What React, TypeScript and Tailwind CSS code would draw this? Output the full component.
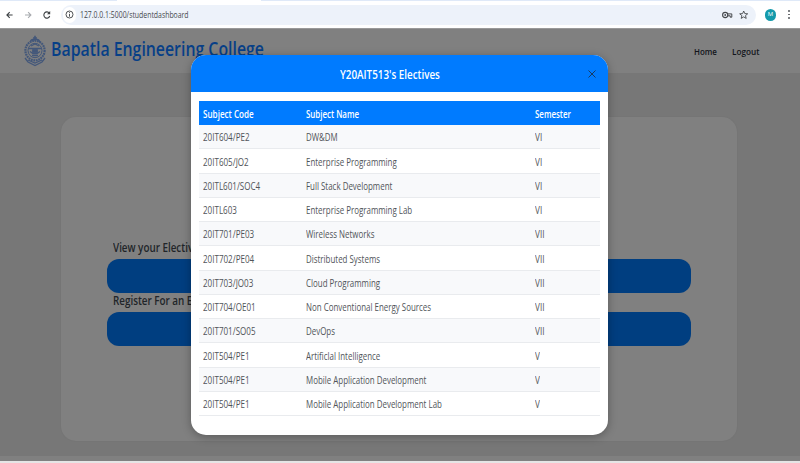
import React from 'react';

const electives: [string, string, string][] = [
  ['20IT604/PE2', 'DW&DM', 'VI'],
  ['20IT605/JO2', 'Enterprise Programming', 'VI'],
  ['20ITL601/SOC4', 'Full Stack Development', 'VI'],
  ['20ITL603', 'Enterprise Programming Lab', 'VI'],
  ['20IT701/PE03', 'Wireless Networks', 'VII'],
  ['20IT702/PE04', 'Distributed Systems', 'VII'],
  ['20IT703/JO03', 'Cloud Programming', 'VII'],
  ['20IT704/OE01', 'Non Conventional Energy Sources', 'VII'],
  ['20IT701/SO05', 'DevOps', 'VII'],
  ['20IT504/PE1', 'Artificlal Intelligence', 'V'],
  ['20IT504/PE1', 'Mobile Application Development', 'V'],
  ['20IT504/PE1', 'Mobile Application Development Lab', 'V'],
];

function T({ children, className = '' }: { children: React.ReactNode; className?: string }) {
  return <span className={`inline-block origin-left whitespace-nowrap ${className}`}>{children}</span>;
}

function Crest() {
  return (
    <svg width="24" height="32" viewBox="0 0 24 32" fill="none" stroke="#2f4a78" className="shrink-0 opacity-75">
      <path d="M12 .8v5M10 3h4" strokeWidth="1.6" />
      <path d="M7.5 7c0-3.6 9-3.6 9 0" strokeWidth="1.5" />
      <ellipse cx="12" cy="15.5" rx="9.6" ry="9.8" strokeWidth="2.2" strokeDasharray="1.8 .7" />
      <ellipse cx="12" cy="15.5" rx="7" ry="7.2" strokeWidth="1" />
      <path d="M5.5 13.5h13M7 16.5l3 2h4l3-2M8 11l4-2 4 2M9 20.5h6" strokeWidth="1.3" />
      <path d="M9.5 14.5h5v3h-5z" fill="#2f4a78" strokeWidth=".8" />
      <path d="M2 23l3 4 7 3.5 7-3.5 3-4M5 25l7 3 7-3" strokeWidth="1.3" />
    </svg>
  );
}

function BrowserBar() {
  return (
    <div className="flex h-7 shrink-0 flex-col bg-white">
      <div className="flex h-px shrink-0 bg-[#dfe9f8]">
        <div className="ml-[117px] h-px w-[144px] bg-white" />
      </div>
      <div className="flex flex-1 items-center">
        <svg width="61" height="20" viewBox="0 0 61 20" fill="none" strokeWidth="1.1" className="shrink-0">
          <path d="M12.6 10H7M9.7 7.2 6.9 10l2.8 2.8" stroke="#3c4043" />
          <path d="M25 10h5.8M28.1 7.2l2.8 2.8-2.8 2.8" stroke="#a8abaf" />
          <path d="M49.3 8.2a3 3.1 0 1 0 .4 2.8" stroke="#3c4043" />
          <path d="M50.2 6v3.2H47z" fill="#3c4043" stroke="none" />
        </svg>
        <div className="flex h-5 w-[695px] shrink-0 items-center rounded-full bg-[#edf2fa] pl-[2px] pr-[7px]">
          <div className="flex h-4 w-[13px] items-center justify-center rounded-full bg-white">
            <svg width="9" height="9" viewBox="0 0 9 9" fill="none" stroke="#3c4043" strokeWidth=".9">
              <circle cx="4.5" cy="4.5" r="3.5" />
              <path d="M4.5 4v2.7M4.5 2.2v1" />
            </svg>
          </div>
          <T className="ml-1 scale-x-[.765] text-[9px] text-[#45484c]">127.0.0.1:5000/studentdashboard</T>
          <svg width="28" height="12" viewBox="0 0 28 12" fill="none" stroke="#45484c" className="ml-auto">
            <circle cx="4.2" cy="6" r="2.6" strokeWidth="1.1" />
            <circle cx="4.2" cy="6" r=".9" fill="#45484c" stroke="none" />
            <path d="M6.8 4.9h4v3.3H9.2V6.8H6.8" strokeWidth="1" />
            <path d="m22.7 2 1.1 2.6 2.9.2-2.2 1.8.7 2.8-2.5-1.5-2.5 1.5.7-2.8-2.2-1.8 2.9-.2z" strokeWidth=".9" />
          </svg>
        </div>
        <div className="ml-[9px] flex h-3 w-[11px] items-center justify-center rounded-full bg-[#149aab] text-[6px] text-white">M</div>
        <div className="ml-[12px] flex flex-col gap-[1.5px]">
          <i className="size-[1.8px] rounded-full bg-[#55585c]" />
          <i className="size-[1.8px] rounded-full bg-[#55585c]" />
          <i className="size-[1.8px] rounded-full bg-[#55585c]" />
        </div>
      </div>
    </div>
  );
}

function ElectivesDialog() {
  return (
    <div className="absolute left-[191px] top-[55px] flex h-[380px] w-[417px] flex-col overflow-hidden rounded-[15px] bg-white shadow-[0_2px_10px_rgba(0,0,0,0.3)]">
      <div className="flex h-[37px] shrink-0 items-center justify-between bg-[#007bff] pt-px pr-3 pl-[149px]">
        <T className="mt-px scale-x-[.82] text-[12px] font-semibold text-white">Y20AIT513&apos;s Electives</T>
        <svg width="8" height="8" viewBox="0 0 8 8" stroke="#183454" strokeWidth=".9">
          <path d="m.5.5 7 7M7.5.5l-7 7" />
        </svg>
      </div>
      <div className="px-2 pt-[9px]">
        <div className="grid h-6 grid-cols-[103px_229px_1fr] items-center bg-[#007bff] pt-[2px] pl-1 text-[10px] font-semibold text-white">
          <T className="scale-x-[.81]">Subject Code</T>
          <T className="scale-x-[.79]">Subject Name</T>
          <T className="scale-x-[.79]">Semester</T>
        </div>
        {electives.map(([code, name, sem], i) => (
          <div key={i} className="grid h-[24.25px] grid-cols-[103px_229px_1fr] items-center border-b border-[#e9ebee] pt-[2.5px] pl-1 text-[10px] text-[#505459] odd:bg-white even:bg-[#f8f9fb]">
            <T className="scale-x-[.805]">{code}</T>
            <T className="scale-x-[.793]">{name}</T>
            <T className="scale-x-[.82]">{sem}</T>
          </div>
        ))}
      </div>
    </div>
  );
}

export default function App() {
  return (
    <div className="relative flex h-[463px] w-[800px] flex-col overflow-hidden bg-[#777777] font-['Open_Sans','Noto_Sans',sans-serif]">
      <BrowserBar />
      <nav className="flex h-[45px] shrink-0 items-center border-t border-[#999] bg-[#808080] pl-[23px] text-[#12151b]">
        <Crest />
        <T className="ml-1 -mt-[3px] scale-x-[.834] text-[19px] font-semibold text-[#073f87]">Bapatla Engineering College</T>
        <div className="ml-auto flex w-[106px] pt-px text-[9px] font-semibold">
          <T className="w-[38px] scale-x-[.88]">Home</T>
          <T className="scale-x-[.91]">Logout</T>
        </div>
      </nav>
      <main className="mt-11 ml-[61px] h-[324px] w-[676px] shrink-0 rounded-[15px] bg-[#808080] pl-[46px] pt-[121px] text-[12px] font-semibold leading-[17px] text-[#212529] shadow-[0_0_2px_rgba(0,0,0,0.06)]">
        <div className="flex h-[21px] items-start pt-px pl-[6px]"><T className="scale-x-[.82]">View your Electives</T></div>
        <div className="h-[34px] w-[584px] rounded-[12px] bg-[#003e80]" />
        <div className="flex h-[19px] items-start pl-[6px]"><T className="-mt-px scale-x-[.82]">Register For an Elective</T></div>
        <div className="h-[34px] w-[584px] rounded-[12px] bg-[#003e80]" />
      </main>
      <footer className="mt-auto h-[7px] shrink-0 border-b-2 border-[#e5e5e5] bg-[#808080]" />
      <ElectivesDialog />
    </div>
  );
}
